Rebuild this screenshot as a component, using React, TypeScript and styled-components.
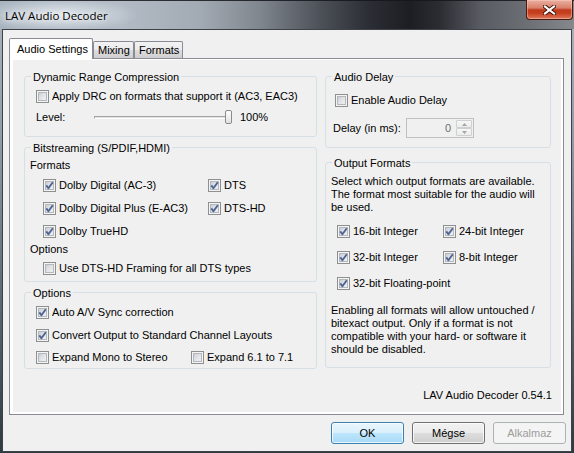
import React from "react";
import styled, { createGlobalStyle } from "styled-components";

const GlobalStyle = createGlobalStyle`
  html, body { margin: 0; padding: 0; background: #ffffff; }
  body {
    font-family: "Liberation Sans", Arial, sans-serif;
    font-size: 11px;
    color: #000;
  }
  *, *::before, *::after { box-sizing: border-box; }
`;

const Window = styled.div`
  width: 574px;
  height: 453px;
  display: flex;
  flex-direction: column;
  padding: 0 2px 1px;
  overflow: hidden;
  background: linear-gradient(180deg, #aab5c0 0px, #8f9ba6 140px, #55636d 320px, #2d3a42 453px);
`;

const TitleBar = styled.div`
  flex: none;
  height: 29px;
  margin: 0 -2px;
  padding: 0 1px 0 5px;
  display: flex;
  justify-content: space-between;
  align-items: flex-start;
  background:
    radial-gradient(ellipse 80px 17px at 58px 15px, rgba(236, 241, 246, 0.85) 0%, rgba(236, 241, 246, 0) 100%),
    linear-gradient(90deg, #a7b3bf 0px, #b3bcc6 120px, #a2aab3 200px, #80868e 260px, #4d5158 320px, #2a2d33 370px, #1c1e23 410px, #2b2d33 440px, #585b61 480px, #6d7075 530px, #85888d 574px);
  box-shadow: inset 0 1px 0 rgba(20, 22, 26, 0.85);
`;

const Caption = styled.span`
  align-self: center;
  margin-top: 1px;
  font-family: "Open Sans", "Noto Sans", sans-serif;
  font-size: 11.5px;
  color: #000;
  text-shadow: 0 0 5px rgba(255, 255, 255, 0.9), 0 0 9px rgba(255, 255, 255, 0.7);
`;

const CloseButton = styled.div`
  flex: none;
  width: 47px;
  height: 20px;
  border: 1px solid #4a1a10;
  border-top: none;
  border-radius: 0 0 4px 4px;
  display: flex;
  align-items: center;
  justify-content: center;
  background: linear-gradient(180deg, #eab0a2 0%, #d98069 42%, #c13a1d 52%, #c5401f 70%, #e07a5e 100%);
  box-shadow: inset 0 0 0 1px rgba(255, 210, 200, 0.45);
`;

const Client = styled.div`
  flex: 1;
  display: flex;
  flex-direction: column;
  background: #f0f0f0;
  border: 1px solid #3d4249;
  padding: 8px 5px 7px 6px;
`;

const TabStrip = styled.div`
  flex: none;
  height: 20px;
  display: flex;
  align-items: flex-end;
`;

const Tab = styled.div<{ $active?: boolean; $w: number; $pl: number }>`
  position: relative;
  z-index: ${(p) => (p.$active ? 1 : 0)};
  width: ${(p) => p.$w}px;
  height: ${(p) => (p.$active ? 21 : 17)}px;
  margin-bottom: ${(p) => (p.$active ? -1 : 0)}px;
  padding: 0 0 ${(p) => (p.$active ? 1 : 0)}px ${(p) => p.$pl}px;
  border: 1px solid #898c95;
  border-bottom: none;
  border-radius: 2px 2px 0 0;
  display: flex;
  align-items: center;
  white-space: nowrap;
  background: ${(p) =>
    p.$active
      ? "#ffffff"
      : "linear-gradient(180deg, #f2f2f2 0%, #ebebeb 50%, #dddddd 51%, #cfcfcf 100%)"};
`;

const TabPanel = styled.div`
  flex: none;
  width: 555px;
  height: 357px;
  border: 1px solid #898c95;
  background: #ffffff;
  padding: 1px 2px 2px 3px;
  display: flex;
`;

const Page = styled.div`
  flex: 1;
  background: #f0f0f0;
  padding: 9px 9px 0 11px;
  display: flex;
  flex-direction: column;
`;

const Columns = styled.div`
  display: flex;
  gap: 8px;
  align-items: flex-start;
`;

const Column = styled.div<{ $w: number; $gap: number }>`
  width: ${(p) => p.$w}px;
  display: flex;
  flex-direction: column;
  gap: ${(p) => p.$gap}px;
`;

const Group = styled.fieldset`
  margin: 0;
  padding: 0;
  min-width: 0;
  border: 1px solid #d5dfe5;
  border-radius: 3px;
`;

const Legend = styled.legend`
  margin-left: 6px;
  padding: 2px 2px 0;
  height: 15px;
  line-height: 13px;
  font-size: 11px;
`;

const GroupBody = styled.div<{ $p: string }>`
  padding: ${(p) => p.$p};
  display: flex;
  flex-direction: column;
`;

const Row = styled.div<{ $h: number; $mt?: number; $pl?: number }>`
  height: ${(p) => p.$h}px;
  margin-top: ${(p) => p.$mt ?? 0}px;
  padding-left: ${(p) => p.$pl ?? 0}px;
  display: flex;
  align-items: center;
`;

const CheckGrid = styled.div<{ $col: number; $row: number; $gap: number; $pl: number; $mt: number }>`
  display: grid;
  grid-template-columns: ${(p) => p.$col}px auto;
  grid-auto-rows: ${(p) => p.$row}px;
  row-gap: ${(p) => p.$gap}px;
  padding-left: ${(p) => p.$pl}px;
  margin-top: ${(p) => p.$mt}px;
  align-items: center;
`;

const SubLabel = styled.div`
  height: 14px;
  line-height: 14px;
`;

const Para = styled.div<{ $mt?: number }>`
  margin-top: ${(p) => p.$mt ?? 0}px;
  line-height: 13px;
  white-space: nowrap;
`;

const CheckLabel = styled.label`
  display: inline-flex;
  align-items: center;
  gap: 3px;
  white-space: nowrap;
  line-height: 13px;
`;

const Box = styled.span`
  flex: none;
  width: 13px;
  height: 13px;
  border: 1px solid #8e8f8f;
  display: flex;
  background: linear-gradient(135deg, #b9bec4 0%, #dfe2e5 45%, #f6f6f6 100%);
  box-shadow: inset 0 0 0 1px #f4f4f4, inset 0 0 0 2px #b4b8bd;
`;

const FieldLabel = styled.span<{ $w: number }>`
  flex: none;
  width: ${(p) => p.$w}px;
  white-space: nowrap;
`;

const Slider = styled.div`
  flex: none;
  width: 138px;
  height: 22px;
  display: flex;
  align-items: center;
`;

const SliderLine = styled.div`
  flex: 1;
  height: 3px;
  margin-right: -1px;
  border-top: 1px solid #a4a4a4;
  border-bottom: 1px solid #ffffff;
  border-left: 1px solid #a4a4a4;
  background: #e2e2e2;
`;

const Thumb = styled.div`
  flex: none;
  width: 7px;
  height: 14px;
  border: 1px solid #8b8b8b;
  border-radius: 2px;
  background: linear-gradient(180deg, #fdfdfd 0%, #eeeeee 60%, #e0e0e0 100%);
`;

const Percent = styled.span`
  margin-left: 8px;
`;

const Spin = styled.div`
  flex: none;
  width: 68px;
  height: 20px;
  border: 1px solid #bfc1c4;
  background: #f0f0f0;
  display: flex;
  align-items: stretch;
  padding: 1px 1px 1px 0;
`;

const SpinValue = styled.span`
  flex: 1;
  text-align: right;
  padding-right: 5px;
  color: #6d6d6d;
  line-height: 16px;
`;

const SpinButtons = styled.div`
  flex: none;
  width: 16px;
  display: flex;
  flex-direction: column;
`;

const SpinBtn = styled.div`
  flex: 1;
  border: 1px solid #cfd0d2;
  border-radius: 1px;
  background: linear-gradient(180deg, #f7f7f7, #ececec);
  display: flex;
  align-items: center;
  justify-content: center;
`;

const Version = styled.div`
  margin-top: 20px;
  text-align: right;
  line-height: 13px;
`;

const Footer = styled.div`
  flex: none;
  margin-top: 7px;
  display: flex;
  justify-content: flex-end;
  gap: 8px;
`;

const Button = styled.button<{ $kind: "default" | "normal" | "disabled" }>`
  width: 73px;
  height: 22px;
  padding: 0;
  font-family: "Liberation Sans", Arial, sans-serif;
  font-size: 11px;
  border-radius: 3px;
  border: 1px solid
    ${(p) => (p.$kind === "default" ? "#3c7fb1" : p.$kind === "normal" ? "#707070" : "#adb2b5")};
  color: ${(p) => (p.$kind === "disabled" ? "#9d9d9d" : "#000")};
  background: ${(p) =>
    p.$kind === "default"
      ? "linear-gradient(180deg, #eaf6fd 0%, #d9f0fc 50%, #bee6fd 51%, #a7d9f5 100%)"
      : p.$kind === "normal"
      ? "linear-gradient(180deg, #f2f2f2 0%, #ebebeb 50%, #dddddd 51%, #cfcfcf 100%)"
      : "#f4f4f4"};
  box-shadow: inset 0 0 0 1px
    ${(p) => (p.$kind === "disabled" ? "rgba(255,255,255,0)" : "rgba(255,255,255,0.75)")};
`;

function CheckBox({ label, checked }: { label: string; checked?: boolean }) {
  return (
    <CheckLabel>
      <Box>
        {checked && (
          <svg width="11" height="11" viewBox="0 0 11 11">
            <polyline
              points="2.3,5.4 4.4,8.2 8.8,2.3"
              fill="none"
              stroke="#4d6394"
              strokeWidth="1.9"
              strokeLinejoin="round"
            />
          </svg>
        )}
      </Box>
      {label}
    </CheckLabel>
  );
}

function Arrow({ up }: { up?: boolean }) {
  return (
    <svg width="5" height="3" viewBox="0 0 5 3">
      <polygon points={up ? "0,3 5,3 2.5,0" : "0,0 5,0 2.5,3"} fill="#a5a5a5" />
    </svg>
  );
}

export default function App() {
  return (
    <>
      <GlobalStyle />
      <Window>
        <TitleBar>
          <Caption>LAV Audio Decoder</Caption>
          <CloseButton>
            <svg width="13" height="10" viewBox="0 0 13 10">
              <path d="M2 1.5 L11 8.5 M11 1.5 L2 8.5" stroke="#3a0f06" strokeWidth="4" strokeLinecap="square" />
              <path d="M2 1.5 L11 8.5 M11 1.5 L2 8.5" stroke="#ffffff" strokeWidth="2.2" strokeLinecap="square" />
            </svg>
          </CloseButton>
        </TitleBar>
        <Client>
          <TabStrip>
            <Tab $active $w={84} $pl={7}>Audio Settings</Tab>
            <Tab $w={41} $pl={4}>Mixing</Tab>
            <Tab $w={49} $pl={4}>Formats</Tab>
          </TabStrip>
          <TabPanel>
            <Page>
              <Columns>
                <Column $w={293} $gap={3}>
                  <Group>
                    <Legend>Dynamic Range Compression</Legend>
                    <GroupBody $p="5px 0 8px 11px">
                      <Row $h={15}>
                        <CheckBox label="Apply DRC on formats that support it (AC3, EAC3)" />
                      </Row>
                      <Row $h={22} $mt={2}>
                        <FieldLabel $w={58}>Level:</FieldLabel>
                        <Slider>
                          <SliderLine />
                          <Thumb />
                        </Slider>
                        <Percent>100%</Percent>
                      </Row>
                    </GroupBody>
                  </Group>
                  <Group>
                    <Legend>Bitstreaming (S/PDIF,HDMI)</Legend>
                    <GroupBody $p="3px 0 1px 5px">
                      <SubLabel>Formats</SubLabel>
                      <CheckGrid $col={165} $row={22} $gap={1} $pl={13} $mt={2}>
                        <CheckBox checked label="Dolby Digital (AC-3)" />
                        <CheckBox checked label="DTS" />
                        <CheckBox checked label="Dolby Digital Plus (E-AC3)" />
                        <CheckBox checked label="DTS-HD" />
                        <CheckBox checked label="Dolby TrueHD" />
                      </CheckGrid>
                      <SubLabel>Options</SubLabel>
                      <Row $h={23} $mt={1} $pl={13}>
                        <CheckBox label="Use DTS-HD Framing for all DTS types" />
                      </Row>
                    </GroupBody>
                  </Group>
                  <Group>
                    <Legend>Options</Legend>
                    <GroupBody $p="1px 0 0 11px">
                      <Row $h={23}>
                        <CheckBox checked label="Auto A/V Sync correction" />
                      </Row>
                      <Row $h={22}>
                        <CheckBox checked label="Convert Output to Standard Channel Layouts" />
                      </Row>
                      <CheckGrid $col={155} $row={22} $gap={0} $pl={0} $mt={0}>
                        <CheckBox label="Expand Mono to Stereo" />
                        <CheckBox label="Expand 6.1 to 7.1" />
                      </CheckGrid>
                    </GroupBody>
                  </Group>
                </Column>
                <Column $w={226} $gap={7}>
                  <Group>
                    <Legend>Audio Delay</Legend>
                    <GroupBody $p="9px 0 9px 0">
                      <Row $h={15} $pl={9}>
                        <CheckBox label="Enable Audio Delay" />
                      </Row>
                      <Row $h={20} $mt={10} $pl={7}>
                        <FieldLabel $w={73}>Delay (in ms):</FieldLabel>
                        <Spin>
                          <SpinValue>0</SpinValue>
                          <SpinButtons>
                            <SpinBtn>
                              <Arrow up />
                            </SpinBtn>
                            <SpinBtn>
                              <Arrow />
                            </SpinBtn>
                          </SpinButtons>
                        </Spin>
                      </Row>
                    </GroupBody>
                  </Group>
                  <Group>
                    <Legend>Output Formats</Legend>
                    <GroupBody $p="5px 0 11px 5px">
                      <Para>
                        Select which output formats are available.
                        <br />
                        The format most suitable for the audio will
                        <br />
                        be used.
                      </Para>
                      <CheckGrid $col={106} $row={26} $gap={0} $pl={6} $mt={4}>
                        <CheckBox checked label="16-bit Integer" />
                        <CheckBox checked label="24-bit Integer" />
                        <CheckBox checked label="32-bit Integer" />
                        <CheckBox checked label="8-bit Integer" />
                        <CheckBox checked label="32-bit Floating-point" />
                      </CheckGrid>
                      <Para $mt={8}>
                        Enabling all formats will allow untouched /
                        <br />
                        bitexact output. Only if a format is not
                        <br />
                        compatible with your hard- or software it
                        <br />
                        should be disabled.
                      </Para>
                    </GroupBody>
                  </Group>
                </Column>
              </Columns>
              <Version>LAV Audio Decoder 0.54.1</Version>
            </Page>
          </TabPanel>
          <Footer>
            <Button $kind="default">OK</Button>
            <Button $kind="normal">Mégse</Button>
            <Button $kind="disabled" disabled>
              Alkalmaz
            </Button>
          </Footer>
        </Client>
      </Window>
    </>
  );
}
